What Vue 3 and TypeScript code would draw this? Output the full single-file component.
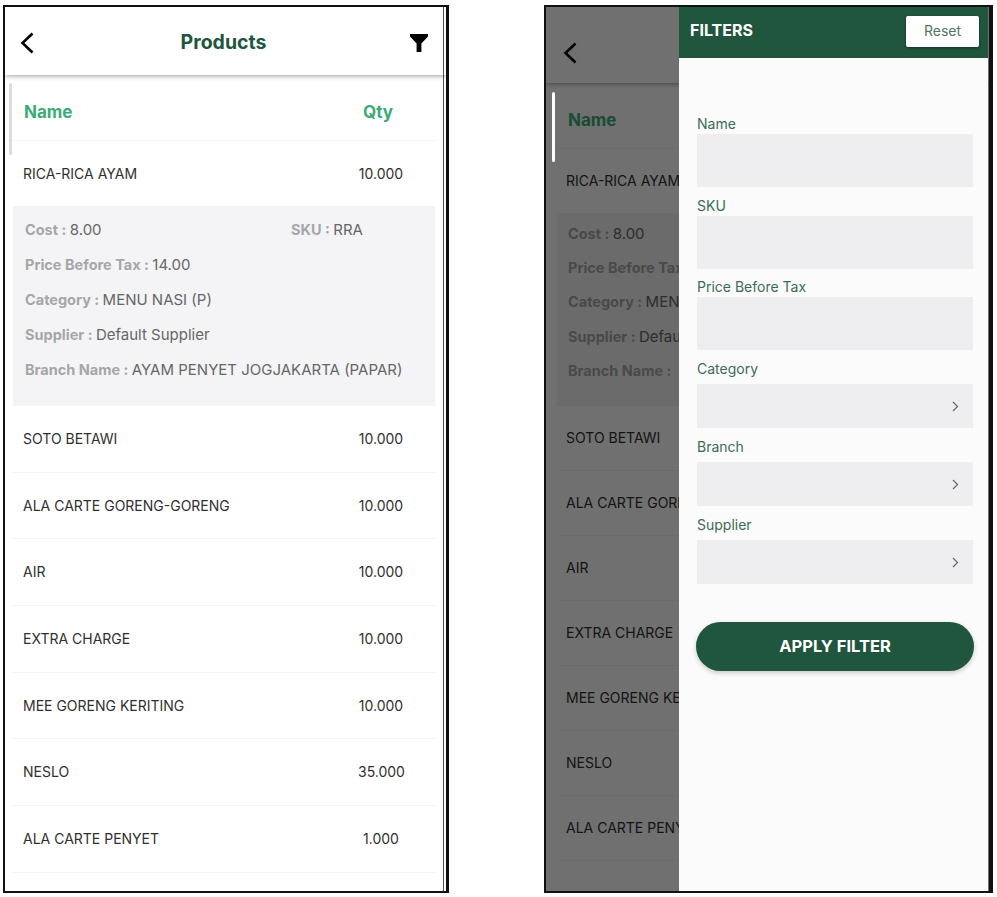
<script setup lang="ts">
interface Row { name: string; qty: string }
const rows: Row[] = [
  { name: 'SOTO BETAWI', qty: '10.000' },
  { name: 'ALA CARTE GORENG-GORENG', qty: '10.000' },
  { name: 'AIR', qty: '10.000' },
  { name: 'EXTRA CHARGE', qty: '10.000' },
  { name: 'MEE GORENG KERITING', qty: '10.000' },
  { name: 'NESLO', qty: '35.000' },
  { name: 'ALA CARTE PENYET', qty: '1.000' },
]
const textFields = ['Name', 'SKU', 'Price Before Tax']
const selectFields = ['Category', 'Branch', 'Supplier']
const phones = ['left', 'right']
</script>

<template>
  <div class="page">
    <section v-for="p in phones" :key="p" class="phone" :class="p">
      <header class="bar">
        <svg class="back" viewBox="0 0 14 22" width="14" height="22">
          <path d="M12.5 1.5 2.5 11l10 9.5" fill="none" stroke="#000" stroke-width="2.6" />
        </svg>
        <h1 v-if="p === 'left'" class="title">Products</h1>
        <svg v-if="p === 'left'" class="funnel" viewBox="0 0 18 18" width="18" height="18">
          <path d="M0 0h18v2.4L11.4 9.6V18H6.6V9.6L0 2.4z" fill="#000" />
        </svg>
      </header>
      <div class="list">
        <div class="head">
          <span>Name</span>
          <span v-if="p === 'left'">Qty</span>
        </div>
        <div class="row first">
          <span>RICA-RICA AYAM</span>
          <span v-if="p === 'left'" class="qty">10.000</span>
        </div>
        <div class="detail">
          <div class="line">
            <span class="cell"><b>Cost : </b>8.00</span>
            <span v-if="p === 'left'"><b>SKU : </b>RRA</span>
          </div>
          <div class="line"><b>Price Before Tax : </b><template v-if="p === 'left'">14.00</template></div>
          <div class="line"><b>Category : </b>MENU NASI (P)</div>
          <div class="line"><b>Supplier : </b>Default Supplier</div>
          <div class="line"><b>Branch Name : </b><template v-if="p === 'left'">AYAM PENYET JOGJAKARTA (PAPAR)</template></div>
        </div>
        <div v-for="r in rows" :key="r.name" class="row">
          <span>{{ r.name }}</span>
          <span v-if="p === 'left'" class="qty">{{ r.qty }}</span>
        </div>
      </div>
      <i class="scroll"></i>
      <template v-if="p === 'right'">
        <div class="shade"></div>
        <aside class="drawer">
          <div class="drawer-head">
            <strong>FILTERS</strong>
            <button class="reset" type="button">Reset</button>
          </div>
          <form class="form" @submit.prevent>
            <label v-for="f in textFields" :key="f" class="field">
              <span>{{ f }}</span>
              <div class="input"></div>
            </label>
            <label v-for="f in selectFields" :key="f" class="field sel">
              <span>{{ f }}</span>
              <div class="select">
                <svg viewBox="0 0 7 11" width="7" height="11">
                  <path d="M1 1l4.5 4.5L1 10" fill="none" stroke="#666" stroke-width="1.2" />
                </svg>
              </div>
            </label>
            <button class="apply" type="submit">APPLY FILTER</button>
          </form>
        </aside>
      </template>
    </section>
  </div>
</template>

<style scoped>
.page {
  width: 997px;
  height: 897px;
  box-sizing: border-box;
  padding: 5px 0 0 3px;
  display: flex;
  gap: 95px;
  background: #fff;
  font-family: Inter, "Noto Sans", sans-serif;
  overflow: hidden;
}
.phone {
  position: relative;
  width: 446px;
  height: 888px;
  box-sizing: border-box;
  border: 2px solid #111;
  overflow: hidden;
  background: #fff;
  flex: none;
}
.phone.left {
  border-right-width: 3px;
  box-shadow: inset -2px 0 0 #fff, inset -3px 0 0 #555;
}
.phone.right {
  width: 449px;
  border-right-width: 4px;
}
.bar {
  height: 68px;
  box-sizing: border-box;
  display: flex;
  align-items: center;
  justify-content: space-between;
  padding: 3px 18px 0 15px;
  box-shadow: 0 1px 5px rgba(0, 0, 0, 0.38);
  position: relative;
}
.right .bar {
  height: 76px;
  padding: 16px 0 0 17px;
}
.title {
  margin: -1px 0 0 3px;
  font-size: 19.5px;
  font-weight: 700;
  color: #20563e;
}
.list {
  padding: 0 11px 0 8px;
}
.right .list {
  box-sizing: border-box;
  width: 133px;
  padding: 0 0 0 11px;
  overflow: hidden;
  white-space: nowrap;
}
.head {
  height: 66px;
  padding: 8px 42px 0 11px;
  box-sizing: border-box;
  display: flex;
  align-items: center;
  justify-content: space-between;
  font-size: 17px;
  font-weight: 700;
  color: #3bab78;
  border-bottom: 1px solid #f3f3f3;
}
.right .head {
  padding-right: 0;
  color: #3bab78;
}
.row {
  height: 66.7px;
  box-sizing: border-box;
  padding: 0 31px 1px 10px;
  display: flex;
  align-items: center;
  justify-content: space-between;
  font-size: 14px;
  color: #2f2f2f;
  border-bottom: 1px solid #f3f3f3;
}
.right .row {
  height: 65px;
  padding: 0 0 1px 9px;
}
.row.first {
  height: 65px;
  padding-bottom: 0;
  border-bottom: 0;
}
.phone.right .row.first {
  height: 64px;
  padding-bottom: 1px;
  border-bottom: 0;
}
.qty {
  width: 46px;
  text-align: center;
  flex: none;
}
.detail {
  height: 200px;
  box-sizing: border-box;
  padding: 6px 12px 0;
  background: #f4f4f6;
  font-size: 15px;
  color: #666;
}
.right .detail {
  height: 193px;
  padding: 3px 11px 0;
}
.line {
  height: 35px;
  display: flex;
  align-items: center;
  white-space: pre;
}
.right .line {
  height: 34.3px;
}
.line b {
  font-weight: 700;
  font-size: 14.5px;
  color: #a6a6a8;
}
.cell {
  width: 266px;
  flex: none;
}
.scroll {
  position: absolute;
  left: 4px;
  top: 76px;
  width: 3px;
  height: 72px;
  background: #dcdcdc;
  border-radius: 2px;
}
.right .scroll {
  left: 6px;
  top: 85px;
  height: 70px;
  background: #fff;
  z-index: 2;
}
.shade {
  position: absolute;
  inset: 0;
  background: rgba(0, 0, 0, 0.56);
}
.drawer {
  position: absolute;
  top: 0;
  bottom: 0;
  left: 133px;
  width: 309px;
  background: #fbfbfb;
  display: flex;
  flex-direction: column;
}
.drawer-head {
  height: 51px;
  flex: none;
  box-sizing: border-box;
  display: flex;
  align-items: center;
  justify-content: space-between;
  padding: 0 9px 3px 11px;
  background: #20563e;
  color: #fff;
  font-size: 16px;
}
.drawer-head strong {
  font-weight: 700;
  margin-top: -2px;
}
.reset {
  width: 73px;
  height: 31px;
  border: 0;
  padding: 0 0 2px;
  border-radius: 2px;
  background: #fff;
  color: #4f7565;
  font: inherit;
  font-size: 14px;
  box-shadow: 0 1px 3px rgba(0, 0, 0, 0.4);
}
.form {
  padding: 56px 15px 0 18px;
  display: flex;
  flex-direction: column;
}
.field {
  display: block;
  height: 81.5px;
  font-size: 14px;
  color: #3b6b56;
}
.field span {
  display: block;
  height: 20px;
  line-height: 19px;
}
.field.sel {
  height: 78px;
}
.input {
  height: 53px;
  background: #eeeef0;
}
.select {
  height: 44px;
  margin-top: 5.5px;
  padding-right: 14px;
  background: #eeeef0;
  display: flex;
  align-items: center;
  justify-content: flex-end;
}
.apply {
  margin: 29px -1px 0;
  height: 49px;
  border: 0;
  border-radius: 25px;
  background: #20563e;
  color: #fff;
  font: inherit;
  font-size: 16.5px;
  font-weight: 700;
  box-shadow: 0 2px 5px rgba(0, 0, 0, 0.2);
}
</style>
